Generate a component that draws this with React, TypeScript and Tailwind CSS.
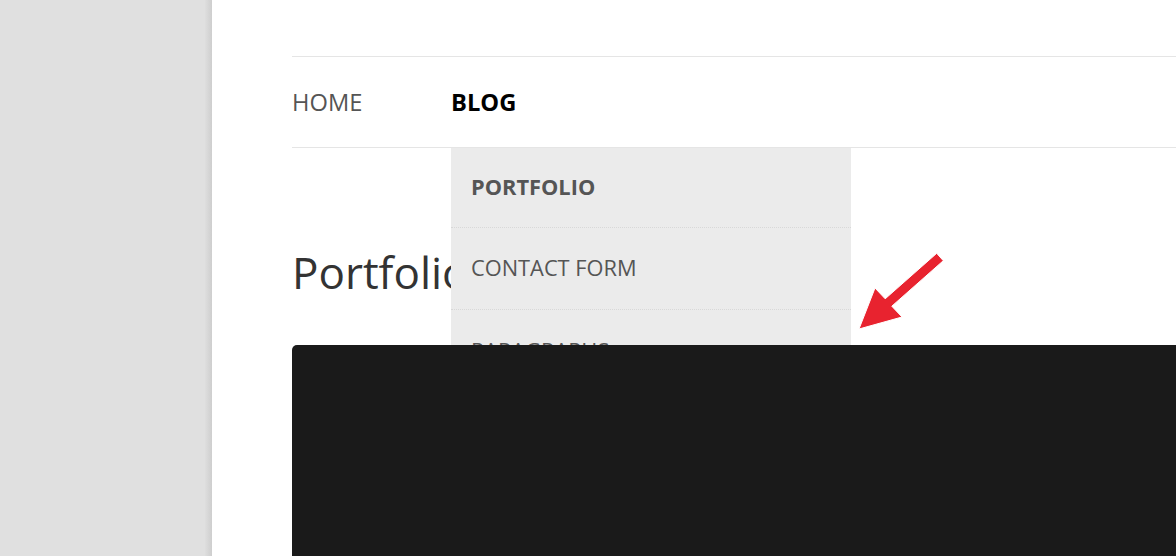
import React from "react";

export default function App() {
  return (
    <div
      className="relative flex h-[556px] w-[1176px] overflow-hidden bg-white"
      style={{ fontFamily: '"Open Sans", "Noto Sans", sans-serif' }}
    >
      <aside className="w-[205px] shrink-0 bg-[#e0e0e0]" />
      <div className="w-[7px] shrink-0 bg-gradient-to-r from-[#dedede] to-[#cecece]" />
      <main className="relative min-w-0 flex-1 bg-white pl-[80px] pt-[56px]">
        <nav className="relative z-0 flex h-[92px] w-[1000px] items-center border-y border-[#e5e5e5] pt-[2px]">
          <a className="w-[159px] text-[23.7px] text-[#555555]">HOME</a>
          <div className="relative flex h-full items-center">
            <a className="text-[23.7px] font-bold text-black">BLOG</a>
            <ul className="absolute left-0 top-[calc(100%+1px)] w-[400px] bg-[#ebebeb]">
              <li className="flex h-[80px] items-center border-b border-dotted border-[#d8d8d8] pl-[20px] text-[21.8px] font-bold text-[#555555]">
                PORTFOLIO
              </li>
              <li className="flex h-[82px] items-center border-b border-dotted border-[#d8d8d8] pl-[20px] text-[21.8px] text-[#555555]">
                CONTACT FORM
              </li>
              <li className="flex h-[82px] items-center pl-[20px] text-[21.8px] text-[#555555]">
                PARAGRAPHS
              </li>
            </ul>
          </div>
        </nav>
        <h1 className="mt-[94px] text-[44px] leading-[60px] text-[#333333]">Portfolio</h1>
        <div className="relative z-10 mt-[43px] h-[300px] w-[1000px] rounded-tl-[5px] bg-[#1a1a1a]" />
      </main>
      <svg
        className="pointer-events-none absolute left-0 top-0 z-20"
        width="1176"
        height="556"
        viewBox="0 0 1176 556"
      >
        <polygon
          points="859,329 875,288 885.2,298.8 936.7,253.3 943.3,260.7 891.8,306.2 902,317"
          fill="#e8232f"
          stroke="#ffffff"
          strokeWidth="1"
          strokeLinejoin="round"
        />
      </svg>
    </div>
  );
}
